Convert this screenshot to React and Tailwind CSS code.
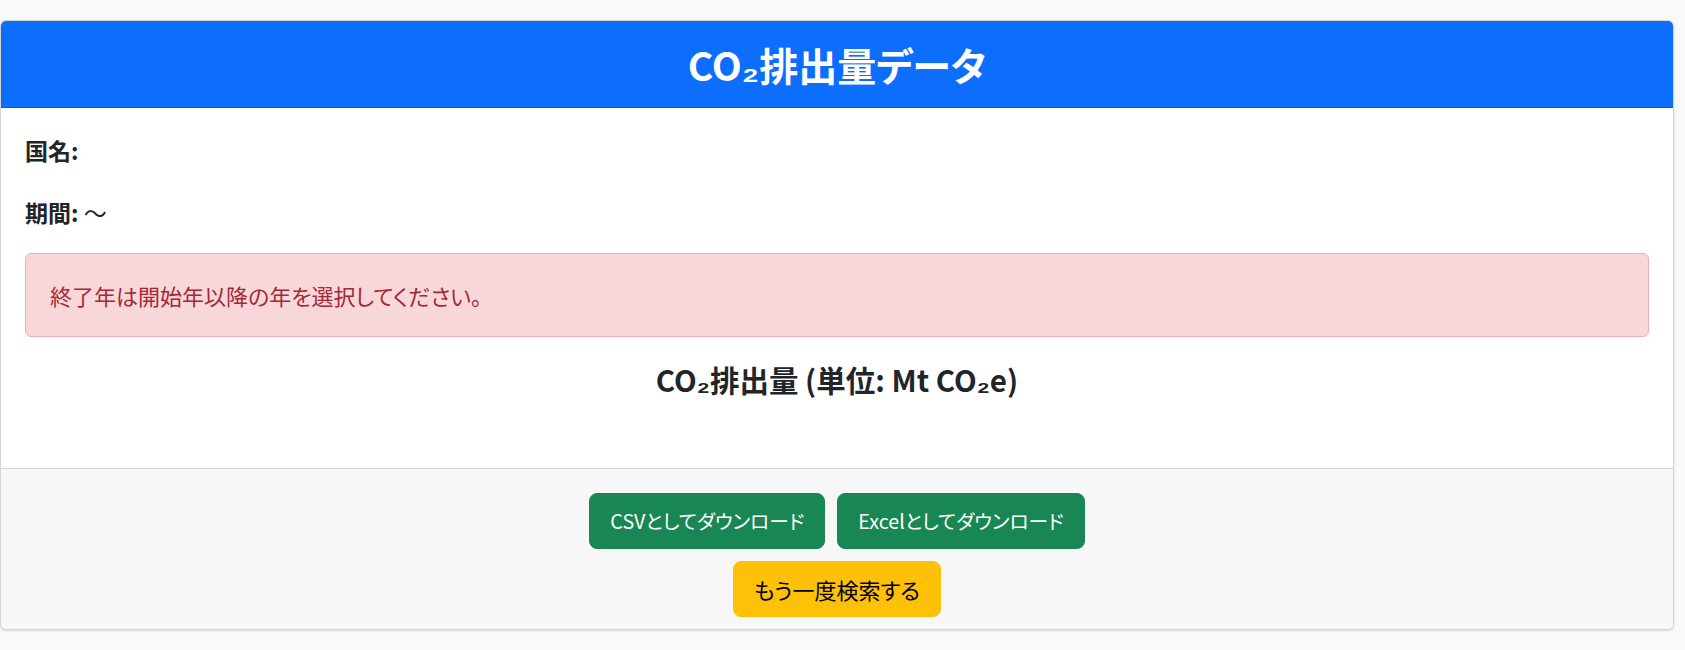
import React from "react";

const font = "font-['Noto_Sans_CJK_JP',sans-serif]";
const palt = "[font-feature-settings:'palt']";

export default function App() {
    return (
        <div className={`min-h-screen bg-[#f8f9fa] pt-[20px] ${font} text-[#212529]`}>
            <div className="w-[1674px] bg-white border border-[#d4d4d4] rounded-[6px] overflow-hidden shadow-sm">
                <div className="bg-[#0d6efd] border-b border-[#0a58ca] py-[19px] text-center">
                    <h1 className={`text-[39px] leading-[48px] font-bold text-white ${palt}`}>CO₂排出量データ</h1>
                </div>
                <div className="px-6 pt-[27px] pb-[74px]">
                    <p className="text-[23px] leading-[30px] font-bold mb-8">国名:</p>
                    <p className="text-[23px] leading-[30px] mb-[26px]">
                        <span className="font-bold">期間:</span> ～
                    </p>
                    <div className={`bg-[#f8d7da] border border-[#f1aeb5] rounded-[6px] px-6 py-[26px] text-[22px] leading-[30px] text-[#a52834] mb-[28px] ${palt}`}>
                        終了年は開始年以降の年を選択してください。
                    </div>
                    <h4 className="text-center text-[29.5px] leading-[29px] font-bold">CO₂排出量 (単位: Mt CO₂e)</h4>
                </div>
                <div className="bg-[#f7f7f7] border-t border-[#d4d4d4] pt-6 pb-3 flex flex-col items-center gap-3">
                    <div className="flex gap-3">
                        <button className={`bg-[#198754] border border-[#198754] text-white text-[19.7px] leading-[30px] px-5 py-3 rounded-lg ${palt}`}>CSVとしてダウンロード</button>
                        <button className={`bg-[#198754] border border-[#198754] text-white text-[19.7px] leading-[30px] px-5 py-3 rounded-lg ${palt}`}>Excelとしてダウンロード</button>
                    </div>
                    <button className={`bg-[#ffc107] border border-[#ffc107] text-black text-[22px] leading-[30px] px-5 py-3 rounded-lg ${palt}`}>もう一度検索する</button>
                </div>
            </div>
        </div>
    );
}
